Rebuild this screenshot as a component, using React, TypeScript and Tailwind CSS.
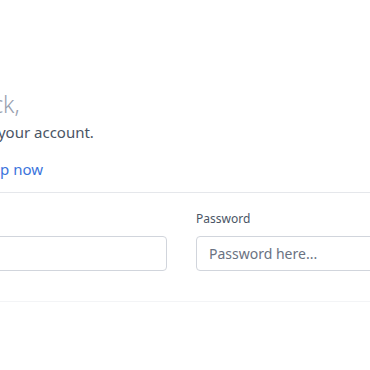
const App = () => {
	return (
		<div className="w-[370px] h-[370px] overflow-hidden bg-white font-['Noto_Sans',sans-serif]">
			<div className="w-[640px] pt-[88px]">
				{/* Header with greeting */}
				<div className="-ml-[140px] pb-[12px] border-b border-gray-200">
					<h1 className="ml-[4px] text-[23px] leading-[32px] font-light text-gray-400">Welcome back,</h1>
					<p className="ml-[68px] text-[15px] leading-[24px] text-gray-600">Sign in to your account.</p>
					<p className="ml-[-71px] mt-[14px] text-[15px] leading-[22px] text-gray-600">
						Don't have an account? <a href="#" className="text-[#3b74dc]">Sign up now</a>
					</p>
				</div>
				{/* Login form */}
				<div className="-ml-[138px] grid grid-cols-[305px_305px] gap-[29px] pt-[17px] pb-[30px] border-b border-gray-100">
					<div className="flex flex-col gap-[8px]">
						<label className="text-[12px] leading-[18px] text-gray-600">Email</label>
						<input type="text" placeholder="Email here..." className="h-[35px] rounded border border-gray-300 px-3 text-[14px] text-gray-700 placeholder-gray-500" />
					</div>
					<div className="flex flex-col gap-[8px]">
						<label className="text-[12px] leading-[18px] text-gray-600">Password</label>
						<input type="password" placeholder="Password here..." className="h-[35px] rounded border border-gray-300 px-3 text-[14px] text-gray-700 placeholder-gray-500" />
					</div>
				</div>
			</div>
		</div>
	)
}
export default App
